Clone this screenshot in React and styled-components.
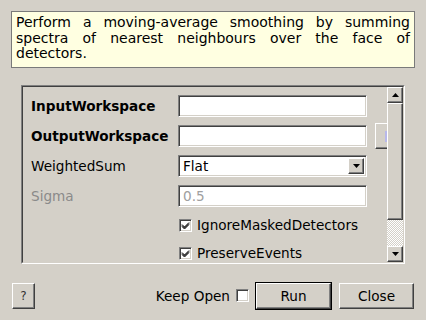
import React from 'react';
import styled, { createGlobalStyle, css } from 'styled-components';

const face = '#d4d0c8';
const shadow = '#808080';
const darkShadow = '#404040';

const GlobalStyle = createGlobalStyle`
    html, body {
        margin: 0;
        background: ${face};
    }
    body {
        font-family: "DejaVu Sans", "Liberation Sans", sans-serif;
        font-size: 13.6px;
        color: #000;
    }
`;

const raised = css`
    box-sizing: border-box;
    border: 1px solid;
    border-color: #fff ${darkShadow} ${darkShadow} #fff;
    box-shadow: inset -1px -1px ${shadow};
    background: ${face};
`;

const sunken = css`
    box-sizing: border-box;
    border: 1px solid;
    border-color: ${shadow} #fff #fff ${shadow};
    box-shadow: inset 1px 1px ${darkShadow}, inset -1px -1px ${face};
    background: #fff;
`;

const Dialog = styled.div`
    width: 426px;
    height: 320px;
    display: flex;
    flex-direction: column;
`;

const Description = styled.div`
    box-sizing: border-box;
    margin: 11px 11px 0 11px;
    height: 57px;
    padding: 3px 4px 0 4px;
    border: 1px solid #7a7a7a;
    background: #ffffe1;
    font-size: 14px;
    line-height: 15.5px;
    text-align: justify;
`;

const Frame = styled.div`
    box-sizing: border-box;
    margin: 17px 0 0 21px;
    width: 384px;
    height: 179px;
    border: 1px solid;
    border-color: ${shadow} #fff #fff ${shadow};
`;

const FrameInner = styled.div`
    height: 100%;
    box-sizing: border-box;
    border: 1px solid;
    border-color: ${darkShadow} ${face} ${face} ${darkShadow};
    display: flex;
`;

const Viewport = styled.div`
    flex: 1;
    overflow: hidden;
    padding: 4px 0 0 8px;
`;

const Row = styled.div`
    display: flex;
    align-items: center;
    height: ${p => p.$h || 30}px;
    white-space: nowrap;
`;

const Label = styled.div`
    width: 147px;
    flex: none;
    font-weight: ${p => (p.$bold ? 'bold' : 'normal')};
    color: ${p => (p.$disabled ? '#8a8a8a' : '#000')};
`;

const Field = styled.div`
    ${sunken};
    width: 189px;
    height: 22px;
    flex: none;
    padding: 0 4px;
    display: flex;
    align-items: center;
    color: ${p => (p.$disabled ? '#a0a0a0' : '#000')};
`;

const Combo = styled(Field)`
    padding: 0 2px 0 4px;
    justify-content: space-between;
`;

const DropButton = styled.div`
    ${raised};
    width: 16px;
    height: 16px;
    display: flex;
    align-items: center;
    justify-content: center;
`;

const BrowseButton = styled.div`
    ${raised};
    margin-left: 8px;
    width: 40px;
    height: 26px;
    flex: none;
    display: flex;
    align-items: center;
    padding-left: 9px;
`;

const BrowseMark = styled.div`
    width: 3px;
    height: 11px;
    background: #b8b8ea;
`;

const CheckSpacer = styled.div`
    width: 148px;
    flex: none;
`;

const Box = styled.div`
    ${sunken};
    width: 13px;
    height: 13px;
    flex: none;
    display: flex;
    align-items: center;
    justify-content: center;
`;

const CheckText = styled.span`
    margin-left: 5px;
`;

const Scrollbar = styled.div`
    width: 16px;
    flex: none;
    display: flex;
    flex-direction: column;
`;

const ArrowButton = styled.div`
    ${raised};
    height: 16px;
    flex: none;
    display: flex;
    align-items: center;
    justify-content: center;
`;

const Handle = styled.div`
    ${raised};
    height: 117px;
    flex: none;
`;

const Trough = styled.div`
    flex: 1;
    background: repeating-conic-gradient(#fff 0 25%, ${face} 0 50%) 0 0 / 2px 2px;
`;

const BottomBar = styled.div`
    margin-top: 17px;
    padding: 0 12px;
    height: 29px;
    display: flex;
    align-items: center;
`;

const Button = styled.div`
    ${raised};
    height: 26px;
    width: ${p => p.$w}px;
    margin-left: ${p => p.$ml || 0}px;
    display: flex;
    align-items: center;
    justify-content: center;
    outline: ${p => (p.$default ? '1px solid #000' : 'none')};
    color: ${p => p.$color || '#000'};
    font-size: ${p => p.$fs || 13.6}px;
`;

const Spacer = styled.div`
    flex: 1;
`;

const KeepText = styled.span`
    margin-right: 6px;
`;

const Tick = () => (
    <svg width="9" height="9" viewBox="0 0 9 9">
        <path d="M1 3.5 L3.5 6 L8 1.5 M1 4.5 L3.5 7 L8 2.5 M1 5.5 L3.5 8 L8 3.5" stroke="#000" strokeWidth="1" fill="none" />
    </svg>
);

const Arrow = ({ up }) => (
    <svg width="7" height="4" viewBox="0 0 7 4">
        <path d={up ? 'M3.5 0 L7 4 L0 4 Z' : 'M0 0 L7 0 L3.5 4 Z'} fill="#000" />
    </svg>
);

const Check = ({ children }) => (
    <Row $h={28}>
        <CheckSpacer />
        <Box><Tick /></Box>
        <CheckText>{children}</CheckText>
    </Row>
);

export default function App() {
    return (
        <Dialog>
            <GlobalStyle />
            <Description>
                Perform a moving-average smoothing by summing spectra of nearest neighbours over the face of detectors.
            </Description>
            <Frame>
                <FrameInner>
                    <Viewport>
                        <Row>
                            <Label $bold>InputWorkspace</Label>
                            <Field />
                        </Row>
                        <Row>
                            <Label $bold>OutputWorkspace</Label>
                            <Field />
                            <BrowseButton><BrowseMark /></BrowseButton>
                        </Row>
                        <Row>
                            <Label>WeightedSum</Label>
                            <Combo>
                                <span>Flat</span>
                                <DropButton><Arrow /></DropButton>
                            </Combo>
                        </Row>
                        <Row>
                            <Label $disabled>Sigma</Label>
                            <Field $disabled>0.5</Field>
                        </Row>
                        <Check>IgnoreMaskedDetectors</Check>
                        <Check>PreserveEvents</Check>
                    </Viewport>
                    <Scrollbar>
                        <ArrowButton><Arrow up /></ArrowButton>
                        <Handle />
                        <Trough />
                        <ArrowButton><Arrow /></ArrowButton>
                    </Scrollbar>
                </FrameInner>
            </Frame>
            <BottomBar>
                <Button $w={23} $color="#333" $fs={12}>?</Button>
                <Spacer />
                <KeepText>Keep Open</KeepText>
                <Box />
                <Button $w={75} $ml={7} $default>Run</Button>
                <Button $w={75} $ml={8}>Close</Button>
            </BottomBar>
        </Dialog>
    );
}
